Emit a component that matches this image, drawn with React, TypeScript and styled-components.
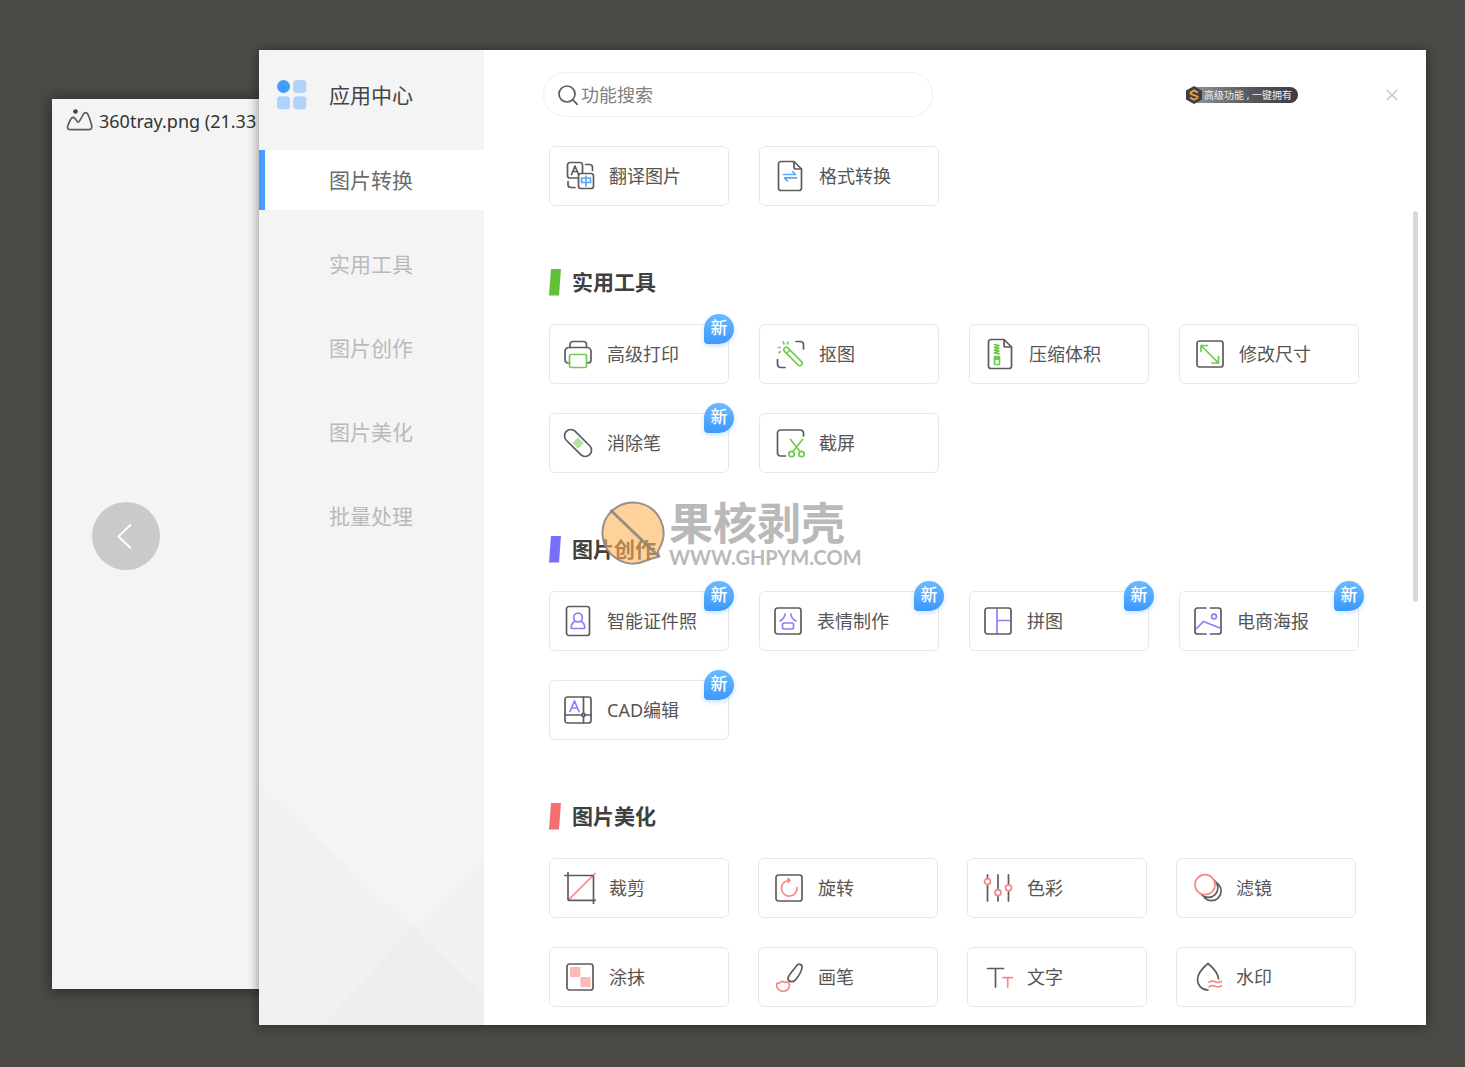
import React from 'react';
import styled, { createGlobalStyle } from 'styled-components';

const GREEN = '#6fcb4b';
const PURPLE = '#8a80fb';
const RED = '#f98888';
const BLUE = '#5ba6fb';
const INK = '#5c5c5c';

const GlobalStyle = createGlobalStyle`
  * { box-sizing: border-box; }
  body {
    margin: 0;
    background: #4c4a47;
    font-family: 'Noto Sans', 'Noto Sans CJK SC', sans-serif;
  }
  button, input { font: inherit; }
`;

const Desktop = styled.div`
  position: relative;
  height: 100vh;
  min-height: 640px;
  overflow: hidden;
`;

const ViewerWindow = styled.section`
  position: absolute;
  inset: 99px 200px 78px 52px;
  display: flex;
  flex-direction: column;
  background: #f4f4f4;
  box-shadow: 0 1px 12px 2px rgba(0, 0, 0, 0.4);
`;

const ViewerTitle = styled.header`
  display: flex;
  align-items: center;
  gap: 6px;
  height: 44px;
  padding-left: 14px;
  font-size: 18px;
  line-height: 24px;
  color: #333;
  white-space: nowrap;
`;

const ViewerBody = styled.div`
  flex: 1;
  display: flex;
  align-items: center;
  padding: 0 40px 60px;
`;

const PrevButton = styled.button`
  display: flex;
  align-items: center;
  justify-content: center;
  width: 68px;
  height: 68px;
  padding: 0;
  border: 0;
  border-radius: 50%;
  background: #cacaca;
`;

const CenterWindow = styled.section`
  position: absolute;
  inset: 50px 39px 42px 259px;
  display: grid;
  grid-template-columns: 225px minmax(0, 1fr);
  background: #fff;
  box-shadow: 0 1px 10px 1px rgba(0, 0, 0, 0.4);
`;

const Sidebar = styled.aside`
  display: flex;
  flex-direction: column;
  min-height: 0;
  overflow: hidden;
  background: #f4f4f4;
`;

const Brand = styled.h1`
  flex: none;
  display: flex;
  align-items: center;
  gap: 22px;
  height: 100px;
  margin: 0;
  padding: 0 0 10px 18px;
  font-size: 21px;
  font-weight: 400;
  line-height: 28px;
  color: #444;
`;

const Nav = styled.nav`
  flex: none;
  display: flex;
  flex-direction: column;
  gap: 24px;
`;

const NavItem = styled.button<{ $active?: boolean }>`
  height: 60px;
  padding: 0 0 0 64px;
  border: 0;
  border-left: 6px solid ${(p) => (p.$active ? '#459dff' : 'transparent')};
  background: ${(p) => (p.$active ? '#fff' : 'transparent')};
  color: ${(p) => (p.$active ? '#6c6c6c' : '#bababa')};
  font-size: 21px;
  line-height: 28px;
  text-align: left;
`;

const SidebarArt = styled.svg`
  flex: none;
  display: block;
  margin-top: auto;
`;

const Main = styled.main`
  display: flex;
  flex-direction: column;
  min-height: 0;
`;

const TopBar = styled.header`
  flex: none;
  display: flex;
  align-items: center;
  padding: 22px 22px 0 59px;
`;

const SearchBox = styled.label`
  display: flex;
  align-items: center;
  gap: 3px;
  flex: 0 1 390px;
  height: 45px;
  padding: 0 20px 0 14px;
  border: 1px solid #efefef;
  border-radius: 23px;
`;

const SearchInput = styled.input`
  flex: 1;
  min-width: 0;
  padding: 0;
  border: 0;
  outline: 0;
  background: transparent;
  font-size: 18px;
  line-height: 24px;
  color: #555;
  &::placeholder { color: #808080; opacity: 1; }
`;

const PromoButton = styled.button`
  display: flex;
  align-items: center;
  height: 18px;
  margin: 0 82px 0 auto;
  padding: 0;
  border: 0;
  background: transparent;
  color: #eee;
  font-size: 10px;
  white-space: nowrap;
`;

const PromoMark = styled.svg`
  position: relative;
  display: block;
`;

const PromoLabel = styled.span`
  height: 16px;
  margin-left: -8px;
  padding: 0 6px 0 10px;
  border-radius: 0 8px 8px 0;
  background: linear-gradient(90deg, #949494, #5b5c5f 50%, #3a3c40);
  line-height: 16px;
`;

const CloseButton = styled.button`
  display: flex;
  align-items: center;
  justify-content: center;
  width: 24px;
  height: 24px;
  padding: 0;
  border: 0;
  background: transparent;
`;

const ScrollArea = styled.div`
  flex: 1;
  display: flex;
  min-height: 0;
`;

const Catalog = styled.div`
  flex: 1;
  display: flex;
  flex-direction: column;
  gap: 62px;
  min-width: 0;
  padding: 29px 8px 18px 65px;
  overflow-y: auto;
  scrollbar-width: none;
`;

const Track = styled.div`
  flex: none;
  width: 5px;
  margin-right: 8px;
  padding-top: 94px;
`;

const Thumb = styled.div`
  height: 48%;
  border-radius: 3px;
  background: #d9d9d9;
`;

const Group = styled.section`
  display: flex;
  flex-direction: column;
  gap: 28px;
`;

const GroupTitle = styled.h2<{ $accent: string }>`
  display: flex;
  align-items: center;
  gap: 11px;
  margin: 0;
  color: #404040;
  font-size: 21px;
  font-weight: 700;
  line-height: 28px;
  &::before {
    content: '';
    width: 12px;
    height: 27px;
    background: ${(p) => p.$accent};
    clip-path: polygon(2px 0, 100% 0, 10px 100%, 0 100%);
  }
`;

const Cards = styled.div<{ $gap: number }>`
  display: grid;
  grid-template-columns: repeat(auto-fill, 180px);
  gap: 29px ${(p) => p.$gap}px;
`;

const Card = styled.button<{ $fresh?: boolean }>`
  position: relative;
  display: flex;
  align-items: center;
  gap: 13px;
  height: 60px;
  padding: 0 0 0 ${(p) => (p.$fresh ? 12 : 14)}px;
  border: 1px solid #e8e8e8;
  border-radius: 6px;
  background: #fff;
  color: #555;
  font-size: 18px;
  line-height: 24px;
  text-align: left;
  white-space: nowrap;
`;

const NewBadge = styled.span`
  position: absolute;
  top: -11px;
  right: -6px;
  width: 30px;
  height: 30px;
  border-radius: 15px 15px 15px 4px;
  background: linear-gradient(#69bafd, #3c98fd);
  box-shadow: 0 2px 5px rgba(70, 160, 255, 0.3);
  color: #fff;
  font-size: 17px;
  font-weight: 500;
  line-height: 28px;
  text-align: center;
`;

const Watermark = styled.div`
  position: absolute;
  top: 501px;
  left: 601px;
  display: flex;
  align-items: flex-start;
  gap: 4px;
  color: #b9b9b9;
  pointer-events: none;
`;

const WatermarkText = styled.div`
  display: flex;
  flex-direction: column;
  gap: 2px;
`;

const WatermarkName = styled.span`
  font-size: 44px;
  font-weight: 700;
  line-height: 44px;
`;

const WatermarkSite = styled.span`
  font-family: Lato, 'Noto Sans', sans-serif;
  font-size: 20px;
  font-weight: 700;
  line-height: 20px;
`;

const IconSvg = styled.svg`
  flex: none;
  display: block;
  fill: none;
  stroke: ${INK};
  stroke-width: 1.7;
  stroke-linecap: round;
  stroke-linejoin: round;
`;

const sheet = (
  <>
    <path d="M20 1.5H7a2.5 2.5 0 0 0-2.5 2.5v24A2.5 2.5 0 0 0 7 30.5h18a2.5 2.5 0 0 0 2.5-2.5V9z" />
    <path d="M20 2v5a2 2 0 0 0 2 2h5.5" />
  </>
);
const square = <rect x="3" y="3" width="26" height="26" rx="2.5" />;

const icons: Record<string, React.ReactNode> = {
  translate: (
    <>
      <path d="M14.500 18H6a2.500 2.500 0 0 1-2.500-2.500V5A2.500 2.500 0 0 1 6 2.500h10A2.500 2.500 0 0 1 18.500 5v8" />
      <path d="M7.500 14.500 11 6l3.500 8.500M8.800 11.500h4.600" />
      <rect x="14.500" y="13.500" width="15" height="15" rx="2.500" />
      <path d="M21.500 4.500h4a3 3 0 0 1 3 3v3M4 21.500v3a3 3 0 0 0 3 3h4" />
      <g stroke={BLUE}>
        <rect x="17.500" y="18" width="9" height="4.500" />
        <path d="M22 16v10" />
      </g>
    </>
  ),
  convert: (
    <>
      {sheet}
      <path stroke={BLUE} d="M9.500 14.500h12l-3-3M22.500 17.800h-12l3 3.200" />
    </>
  ),
  print: (
    <>
      <path d="M8 9.500V6.500a3 3 0 0 1 3-3h10.500a3 3 0 0 1 3 3v3" />
      <path d="M7.500 25H6a3 3 0 0 1-3-3v-8.500a4 4 0 0 1 4-4h18a4 4 0 0 1 4 4V22a3 3 0 0 1-3 3h-1.500" />
      <rect x="7.500" y="16.500" width="17" height="13" rx="1.500" stroke={GREEN} />
    </>
  ),
  cutout: (
    <>
      <path d="M22 3.500h4.500a3 3 0 0 1 3 3V11M3.500 21.500v5a3 3 0 0 0 3 3H11" />
      <g stroke={GREEN}>
        <rect x="-12" y="-2.400" width="24" height="4.800" rx="2.400" transform="translate(19 18.500) rotate(45)" />
        <path d="m12.500 15.500 3.500-3.500M4.500 9.500h1.500M5 14.500l1.500-.8M9.200 4l.8 1.800M14 4l-.5 1.800" />
      </g>
    </>
  ),
  compress: (
    <>
      {sheet}
      <g stroke={GREEN}>
        <path d="M10.500 6.500l4.500 1-4.500 1.800 4.500 1-4.500 1.800 4.500 1-4.500 1.800 4.500 1" />
        <rect x="10.500" y="18.500" width="5" height="8" rx=".5" />
        <path strokeWidth="3" strokeLinecap="butt" d="M10.500 20.500h5" />
      </g>
    </>
  ),
  resize: (
    <>
      {square}
      <path stroke={GREEN} d="M7 7.500 24.500 25M7 13.500v-6h6.500M18 25h6.500v-6.500" />
    </>
  ),
  eraser: (
    <g transform="rotate(45 16 16)">
      <rect x="-.5" y="9.700" width="33" height="12.600" rx="6.300" />
      <rect x="12" y="12" width="8" height="8" fill="#b2e49e" stroke="none" />
    </g>
  ),
  capture: (
    <>
      <path d="M11.500 29H6.500a3 3 0 0 1-3-3V6a3 3 0 0 1 3-3h20a3 3 0 0 1 3 3v3" />
      <g stroke={GREEN}>
        <circle cx="17.500" cy="27" r="2.700" />
        <circle cx="27.500" cy="27" r="2.700" />
        <path d="m16.500 12.500 9.500 12M28.500 12.500l-9.500 12" />
      </g>
    </>
  ),
  idphoto: (
    <>
      <rect x="4.500" y="1.500" width="23" height="29" rx="2.500" />
      <g stroke={PURPLE}>
        <circle cx="16" cy="12.500" r="4.400" />
        <path d="M13 16.300c-2.500 1.200-3.700 3.600-3.800 6.200a1 1 0 0 0 1 1h11.600a1 1 0 0 0 1-1c-.1-2.600-1.300-5-3.800-6.200" />
      </g>
    </>
  ),
  meme: (
    <>
      {square}
      <g stroke={PURPLE}>
        <path d="M13 9c-.3 3-2 5.300-5 7M18.800 9c.3 3 2 5.300 5 7" />
        <rect x="10.500" y="18" width="11" height="6" rx="1.500" />
      </g>
    </>
  ),
  collage: (
    <>
      <path stroke={PURPLE} d="M15 4v24M15 15.500h13" />
      {square}
    </>
  ),
  poster: (
    <>
      <path d="M14 3H5.500A2.500 2.500 0 0 0 3 5.500v21A2.500 2.500 0 0 0 5.500 29H14M18.500 3h8A2.500 2.500 0 0 1 29 5.500v21a2.500 2.500 0 0 1-2.500 2.500h-8" />
      <g stroke={PURPLE}>
        <circle cx="22" cy="11.500" r="2.400" />
        <path d="m4.500 23.500 7-7L28 23" />
      </g>
    </>
  ),
  cad: (
    <>
      {square}
      <path d="M21.500 3v16.500M21.500 22.500V29M3 21h17M23 21h6" />
      <circle cx="21.500" cy="21" r="1.600" />
      <path stroke={PURPLE} d="M8 17.500 12.500 7 17 17.500M9.500 14h6" />
    </>
  ),
  crop: (
    <>
      <path stroke={RED} d="M5 27.300 31 1.500" />
      <path d="M4 .5v26.800a1 1 0 0 0 1 1h26.500M.8 3.500h27.700a1 1 0 0 1 1 1v27" />
    </>
  ),
  rotate: (
    <>
      {square}
      <g stroke={RED}>
        <path d="M24 15.500a7.800 7.800 0 1 1-8.500-7" />
        <path fill={RED} d="m15 6.500 2 1.800-1.800 2z" />
      </g>
    </>
  ),
  smear: (
    <>
      {square}
      <g fill="#fcb9b9" stroke="none">
        <rect x="6" y="6" width="10.300" height="10" rx="1" />
        <rect x="16.300" y="16" width="10.300" height="10.300" rx="1" />
      </g>
    </>
  ),
  brush: (
    <>
      <path d="M23.800 4.500c1.500-2 5.600-1.800 5.200 2-.4 3.500-3.500 8.700-6.200 12-2.500 3.500-8 2.500-7.800-1.500.2-2.500 4.500-7 8.800-12.500z" />
      <path stroke={RED} d="M3.800 22.300c2 .2 2.500-.3 3.700-1.200 1.300-.9 2.800-.7 3.800.4 1.500-.7 3.200-.8 4.300.6 1.300 1.800.7 4.500-.8 6.300-1.800 2-5.300 2.500-7.600 1.200-2.500-1.400-3.900-4.300-3.400-7.300z" />
    </>
  ),
  colour: (
    <>
      <path d="M5.500 2.800v3.700M5.500 12.500V29M16 2.800v15M16 23.800V29M26.500 2.800v10M26.500 18.800V29" />
      <g stroke={RED}>
        <circle cx="5.500" cy="9.600" r="3" />
        <circle cx="16" cy="20.700" r="3" />
        <circle cx="26.500" cy="15.800" r="3" />
      </g>
    </>
  ),
  filter: (
    <>
      <circle cx="20.500" cy="19" r="9.600" fill="#fff" />
      <circle cx="17.300" cy="15.800" r="9.600" fill="#fff" />
      <circle cx="14" cy="12.700" r="10" fill="#fff" stroke={RED} />
    </>
  ),
  type: (
    <>
      <path d="M5.500 7.500h16M13.500 7.500V26" />
      <path stroke={RED} d="M21 16.700h9.500M25.700 16.700V26" />
    </>
  ),
  drop: (
    <>
      <path d="M17 29C10.500 29 6.500 24 6.500 18.500c0-6 5-11.500 10.500-16 5.500 4.500 10 9.500 10.500 15.500" />
      <path stroke={RED} d="M18 21.300c2.500-2 4.300-1.500 6.300-.5s4 1 6.200-.6M18 25.800c2.500-2 4.300-1.500 6.300-.5s4 1 6.200-.6" />
    </>
  ),
};

type Tool = { name: string; icon: string; fresh?: boolean };
type ToolGroup = { title?: string; accent?: string; gap: number; tools: Tool[] };

const groups: ToolGroup[] = [
  {
    gap: 30,
    tools: [
      { name: '翻译图片', icon: 'translate' },
      { name: '格式转换', icon: 'convert' },
    ],
  },
  {
    title: '实用工具',
    accent: '#5fc03a',
    gap: 30,
    tools: [
      { name: '高级打印', icon: 'print', fresh: true },
      { name: '抠图', icon: 'cutout' },
      { name: '压缩体积', icon: 'compress' },
      { name: '修改尺寸', icon: 'resize' },
      { name: '消除笔', icon: 'eraser', fresh: true },
      { name: '截屏', icon: 'capture' },
    ],
  },
  {
    title: '图片创作',
    accent: '#7a6ffb',
    gap: 30,
    tools: [
      { name: '智能证件照', icon: 'idphoto', fresh: true },
      { name: '表情制作', icon: 'meme', fresh: true },
      { name: '拼图', icon: 'collage', fresh: true },
      { name: '电商海报', icon: 'poster', fresh: true },
      { name: 'CAD编辑', icon: 'cad', fresh: true },
    ],
  },
  {
    title: '图片美化',
    accent: '#f46f6f',
    gap: 29,
    tools: [
      { name: '裁剪', icon: 'crop' },
      { name: '旋转', icon: 'rotate' },
      { name: '色彩', icon: 'colour' },
      { name: '滤镜', icon: 'filter' },
      { name: '涂抹', icon: 'smear' },
      { name: '画笔', icon: 'brush' },
      { name: '文字', icon: 'type' },
      { name: '水印', icon: 'drop' },
    ],
  },
];

const navItems = ['图片转换', '实用工具', '图片创作', '图片美化', '批量处理'];

function ToolCard({ tool }: { tool: Tool }) {
  return (
    <Card type="button" $fresh={tool.fresh}>
      <IconSvg width="32" height="32" viewBox="0 0 32 32" aria-hidden="true">
        {icons[tool.icon]}
      </IconSvg>
      {tool.name}
      {tool.fresh && <NewBadge>新</NewBadge>}
    </Card>
  );
}

export default function App() {
  return (
    <>
      <GlobalStyle />
      <Desktop>
        <ViewerWindow>
          <ViewerTitle>
            <IconSvg width="27" height="24" viewBox="0 0 27 24" aria-hidden="true">
              <circle cx="9.500" cy="2.500" r="2.300" fill="#444" stroke="none" />
              <path d="M4.500 20.700c-2.500 0-3.500-2-2.700-4 1-2.700 2.300-6 3.800-7.600 1-1 2.300-1 3.200.2l2.400 3.200c.7.900 1.500.8 2.100-.1l4.200-7.300c1.200-2 3.200-2 4.300.1 1.700 3.300 3 7.700 3.900 11.300.6 2.500-.6 4.200-3 4.200z" />
            </IconSvg>
            <span>360tray.png (21.33</span>
          </ViewerTitle>
          <ViewerBody>
            <PrevButton type="button" aria-label="上一张">
              <svg width="24" height="32" viewBox="0 0 24 32" fill="none" stroke="#fff" strokeWidth="2" aria-hidden="true">
                <path d="M17 4.500 4.500 16.500 17 28.500" />
              </svg>
            </PrevButton>
          </ViewerBody>
        </ViewerWindow>

        <CenterWindow>
          <Sidebar>
            <Brand>
              <svg width="30" height="30" viewBox="0 0 30 30" aria-hidden="true">
                <circle cx="6.500" cy="6.500" r="6.500" fill="#429cff" />
                <g fill="#afd3fb">
                  <rect x="16.300" y="0" width="13" height="13" rx="3.500" />
                  <rect x="0" y="16.300" width="13" height="13" rx="3.500" />
                  <rect x="16.300" y="16.300" width="13" height="13" rx="3.500" />
                </g>
              </svg>
              应用中心
            </Brand>
            <Nav>
              {navItems.map((label, i) => (
                <NavItem key={label} type="button" $active={i === 0}>
                  {label}
                </NavItem>
              ))}
            </Nav>
            <SidebarArt width="225" height="241" viewBox="0 0 225 241" aria-hidden="true">
              <path fill="#000" fillOpacity=".013" d="M0 0l154 143 71 67v31H0z" />
              <path fill="#000" fillOpacity=".013" d="M225 72l-71 71-91 98h162z" />
            </SidebarArt>
          </Sidebar>

          <Main>
            <TopBar>
              <SearchBox>
                <IconSvg width="20" height="20" viewBox="0 0 20 20" aria-hidden="true">
                  <circle cx="9" cy="9" r="8" />
                  <path d="m14.800 14.800 4.500 4.500" />
                </IconSvg>
                <SearchInput type="text" placeholder="功能搜索" aria-label="功能搜索" />
              </SearchBox>
              <PromoButton type="button">
                <PromoMark width="16" height="18" viewBox="0 0 16 18" aria-hidden="true">
                  <path fill="#3d3f44" d="M8 0l8 4.500v9L8 18l-8-4.500v-9z" />
                  <path fill="none" stroke="#e8a33c" strokeWidth="1.800" d="M11.800 6.600 8 4.400 4.500 6.400v1.400l7 2.700v1.300L8 13.800l-3.800-2.200" />
                </PromoMark>
                <PromoLabel>高级功能 , 一键拥有</PromoLabel>
              </PromoButton>
              <CloseButton type="button" aria-label="关闭">
                <svg width="12" height="12" viewBox="0 0 12 12" stroke="#c4c4c4" strokeWidth="1.300" aria-hidden="true">
                  <path d="M.7.700l10.600 10.600M11.300.700.700 11.300" />
                </svg>
              </CloseButton>
            </TopBar>
            <ScrollArea>
              <Catalog>
                {groups.map((group) => (
                  <Group key={group.title ?? 'convert'}>
                    {group.title && <GroupTitle $accent={group.accent ?? INK}>{group.title}</GroupTitle>}
                    <Cards $gap={group.gap}>
                      {group.tools.map((tool) => (
                        <ToolCard key={tool.name} tool={tool} />
                      ))}
                    </Cards>
                  </Group>
                ))}
              </Catalog>
              <Track>
                <Thumb />
              </Track>
            </ScrollArea>
          </Main>
        </CenterWindow>

        <Watermark>
          <svg width="64" height="64" viewBox="0 0 64 64" aria-hidden="true">
            <path
              fill="#ffb45a"
              fillOpacity=".6"
              stroke="#8d8683"
              strokeOpacity=".9"
              strokeWidth="2"
              strokeLinejoin="round"
              d="M58.500 47A30.500 30.500 0 1 0 44 60C50 57.500 54 56.500 58.500 55.500C56.500 53 56.500 50.500 58.500 47z"
            />
            <path stroke="#8d8683" strokeOpacity=".9" strokeWidth="3" d="M9.500 9 57.500 55" />
          </svg>
          <WatermarkText>
            <WatermarkName>果核剥壳</WatermarkName>
            <WatermarkSite>WWW.GHPYM.COM</WatermarkSite>
          </WatermarkText>
        </Watermark>
      </Desktop>
    </>
  );
}
